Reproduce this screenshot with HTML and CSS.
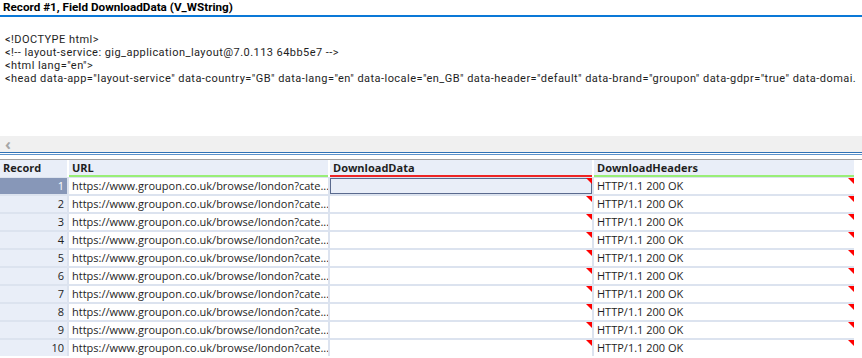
FILE: index.html
```html
<!DOCTYPE html>
<html lang="en">
<head>
  <meta charset="UTF-8">
  <title>Record #1, Field DownloadData</title>
  <link rel="stylesheet" href="styles.css">
</head>
<body>
<div class="viewer">
  <div class="viewer-title">Record #1, Field DownloadData (V_WString)</div>
  <div class="viewer-text">
    <div class="line">&lt;!DOCTYPE html&gt;</div>
    <div class="line">&lt;!-- layout-service: gig_application_layout@7.0.113 64bb5e7 --&gt;</div>
    <div class="line">&lt;html lang="en"&gt;</div>
    <div class="line">&lt;head data-app="layout-service" data-country="GB" data-lang="en" data-locale="en_GB" data-header="default" data-brand="groupon" data-gdpr="true" data-domai.</div>
  </div>
  <div class="hscroll"><span class="arrow">&lsaquo;</span></div>
</div>
<div class="splitter"></div>

<div class="results">
  <div class="grid-head">
    <div class="hcell">Record</div>
    <div class="hcell ok">URL</div>
    <div class="hcell bad">DownloadData</div>
    <div class="hcell ok">DownloadHeaders</div>
  </div>
  <div class="grid-body" id="gridBody"></div>
</div>

<script>
  const url = 'https://www.groupon.co.uk/browse/london?cate...';
  const body = document.getElementById('gridBody');
  let html = '';
  for (let i = 1; i <= 10; i++) {
    const sel = i === 1;
    html += `<div class="cell rec${sel ? ' rec-sel' : ''}">${i}</div>`;
    html += `<div class="cell">${url}</div>`;
    html += `<div class="cell flag${sel ? ' cell-sel' : ''}"></div>`;
    html += `<div class="cell flag">HTTP/1.1 200 OK</div>`;
  }
  body.innerHTML = html;
</script>
</body>
</html>
```

FILE: styles.css
```css
body { margin: 0; background: #fff; font-family: "Segoe UI", "Open Sans", sans-serif; font-size: 11px; color: #1e1e1e; overflow: hidden; }
.viewer { height: 152px; display: flex; flex-direction: column; }
.viewer-title { height: 15px; line-height: 15px; padding-left: 3px; font-family: Roboto, sans-serif; font-weight: bold; font-size: 11.7px; border-bottom: 2px solid #0a78d7; color: #000; }
.viewer-text { flex: 1; padding: 16px 0 0 5px; white-space: nowrap; overflow: hidden; font-family: Roboto, sans-serif; font-size: 11px; letter-spacing: 0.45px; }
.line { height: 13px; line-height: 13px; }
.hscroll { height: 16px; background: #f0f0f0; display: flex; align-items: center; padding-left: 5px; }
.arrow { color: #a6a6a6; font-size: 16px; line-height: 16px; font-weight: bold; }
.splitter { height: 3px; border-top: 1px solid #2f72b6; border-bottom: 1px solid #5b93cc; box-sizing: border-box; margin-bottom: 4px; }
.results { border-top: 1px solid #a0a0a0; }
.grid-head, .grid-body { display: grid; grid-template-columns: 67px 259px 262px 260px; column-gap: 2px; width: 854px; }
.grid-head { background: #fff; }
.hcell { height: 15px; line-height: 15px; background: #e9eef8; font-weight: bold; padding-left: 3px; border-bottom: 2px solid #e9eef8; }
.hcell.ok { border-bottom-color: #99ee77; }
.hcell.bad { border-bottom-color: #ee2424; }
.grid-body { background: #dce3ef; row-gap: 2px; padding-top: 1px; }
.cell { height: 16px; line-height: 16px; background: #fff; padding-left: 3px; white-space: nowrap; overflow: hidden; position: relative; }
.rec { background: #e9eef8; text-align: right; padding: 0 3px 0 0; }
.rec-sel { background: #8797b8; color: #fff; }
.cell-sel { background: #e9eef8; box-shadow: inset 0 0 0 1px #5a6a8e; }
.flag::after { content: ""; position: absolute; top: 0; right: 0; border-style: solid; border-width: 0 6px 6px 0; border-color: transparent #f00 transparent transparent; }
```
